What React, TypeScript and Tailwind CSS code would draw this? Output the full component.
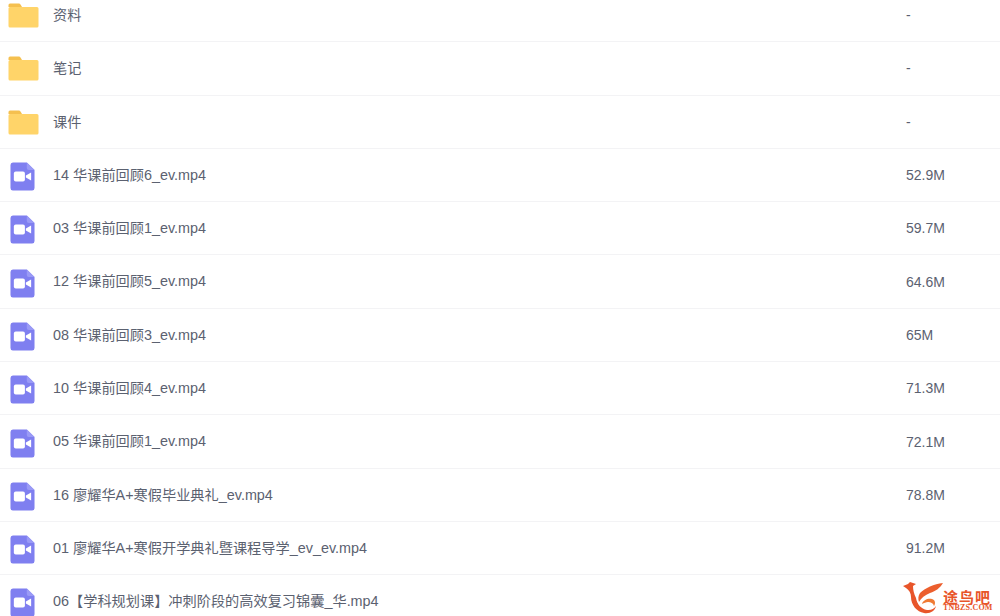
const rows = [
  { n: "资料", s: "-", f: true },
  { n: "笔记", s: "-", f: true },
  { n: "课件", s: "-", f: true },
  { n: "14 华课前回顾6_ev.mp4", s: "52.9M" },
  { n: "03 华课前回顾1_ev.mp4", s: "59.7M" },
  { n: "12 华课前回顾5_ev.mp4", s: "64.6M" },
  { n: "08 华课前回顾3_ev.mp4", s: "65M" },
  { n: "10 华课前回顾4_ev.mp4", s: "71.3M" },
  { n: "05 华课前回顾1_ev.mp4", s: "72.1M" },
  { n: "16 廖耀华A+寒假毕业典礼_ev.mp4", s: "78.8M" },
  { n: "01 廖耀华A+寒假开学典礼暨课程导学_ev_ev.mp4", s: "91.2M" },
  { n: "06【学科规划课】冲刺阶段的高效复习锦囊_华.mp4", s: "" },
];

function Name({ text }: { text: string }) {
  const parts = text.match(/[\u3000-\u9fff\uff00-\uffef]+|[^\u3000-\u9fff\uff00-\uffef]+/g) ?? [];
  return (
    <>
      {parts.map((p, i) =>
        /[\u3000-\u9fff\uff00-\uffef]/.test(p) ? (
          <span key={i} className="text-[14.2px]">{p}</span>
        ) : (
          <span key={i} className="text-[14.4px]">{p}</span>
        )
      )}
    </>
  );
}

function Folder() {
  return (
    <svg width="31" height="25" viewBox="0 0 31 25">
      <path d="M.5 2A1.500 1.500 0 0 1 2 .5h8.500c1 0 1.600.4 2.200 1.200L14 4H.5z" fill="#f5c04f" />
      <path d="M.5 5.500A1.500 1.500 0 0 1 2 4H29A1.500 1.500 0 0 1 30.500 5.500V23A1.500 1.500 0 0 1 29 24.500H2A1.500 1.500 0 0 1 .5 23z" fill="#ffd469" />
    </svg>
  );
}

function Video() {
  return (
    <svg width="25" height="29" viewBox="0 0 26 29" preserveAspectRatio="none">
      <path d="M3 0.500H17.500L25.500 8V26A2.500 2.500 0 0 1 23 28.500H3A2.500 2.500 0 0 1 .5 26V3A2.500 2.500 0 0 1 3 .5z" fill="#7f7ff0" />
      <path d="M17.500 .5L25.500 8H19.500A2 2 0 0 1 17.500 6z" fill="#9a9af6" />
      <rect x="4" y="9.500" width="11.500" height="10" rx="2" fill="#fff" />
      <path d="M16.500 13.500L22 10.500V18.500L16.500 15.500z" fill="#fff" />
    </svg>
  );
}

function Logo() {
  return (
    <div className="absolute left-[903px] top-[581px] flex items-start">
      <svg width="40" height="34" viewBox="0 0 40 34">
        <path d="M0 5L5 3L7 1L13 3L10 5C10 9 11 13 13 17C14 23 18 28 24 29C28 29.500 31 28 33 25C32 30 27 33 21 32C14 31 8 24 8 16C8 12 6 9 3 7z" fill="#e8552a" />
        <path d="M40 2C31 3 22 7 17 12C15 15 15 18 16 21C18 17 22 14 27 12C33 10 37 7 40 2z" fill="#ec5f2e" />
        <path d="M19 23C20 19 25 17 29 18C32 19 33 22 31 25C30 22 28 21 25 21C23 21 21 22 19 23z" fill="#f07a34" />
      </svg>
      <div className="mt-[10px] flex w-[48px] flex-col">
        <span className="h-[13px] whitespace-nowrap text-[15px] font-bold leading-[13px] tracking-[1px] text-[#e8552a]">途鸟吧</span>
        <span className="whitespace-nowrap font-['Liberation_Serif',serif] text-[8px] font-bold leading-[8px] tracking-[0.2px] text-[#e8552a]">TNBZS.COM</span>
      </div>
    </div>
  );
}

export default function App() {
  return (
    <div className="relative h-[616px] w-[1000px] overflow-hidden bg-white font-['Liberation_Sans','Noto_Sans_CJK_SC',sans-serif] text-[14px] text-[#5b6170]">
      <div className="-mt-[11px] flex flex-col">
        {rows.map((r, i) => (
          <div key={i} className="flex h-[53.3px] shrink-0 items-center border-b border-[#f3f3f5]">
            <div className={r.f ? "flex w-[53px] shrink-0 justify-center pr-[6px] pt-[1px]" : "flex w-[53px] shrink-0 justify-center pr-[8px] pt-[3px]"}>{r.f ? <Folder /> : <Video />}</div>
            <div className="w-[853px] shrink-0 whitespace-nowrap pt-[1px]"><Name text={r.n} /></div>
            <div className="pt-[1px]">{r.s}</div>
          </div>
        ))}
      </div>
      <Logo />
    </div>
  );
}
